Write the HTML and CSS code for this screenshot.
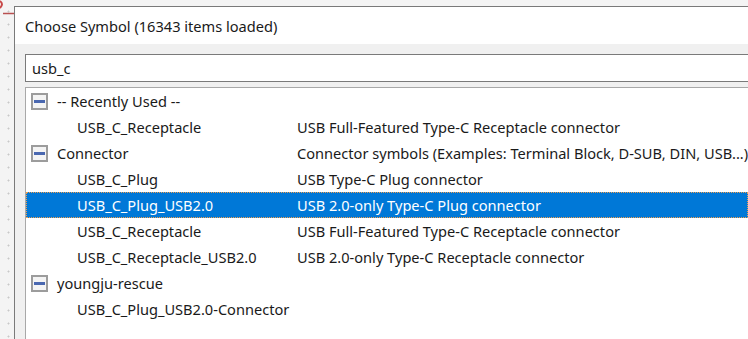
FILE: index.html
```html
<!DOCTYPE html>
<html lang="en">
<head>
  <meta charset="UTF-8">
  <title>Choose Symbol</title>
  <link rel="stylesheet" href="styles.css">
</head>
<body>

<div class="canvas">
  <svg class="wire" width="16" height="16" viewBox="0 0 16 16">
    <path d="M0 1 Q4 4 0 8" fill="none" stroke="#c84848" stroke-width="2"/>
    <path d="M3 13.5 H14" stroke="#b85050" stroke-width="1.5"/>
  </svg>
</div>

<div class="dialog">
  <div class="title">Choose Symbol (16343 items loaded)</div>
  <div class="body">
    <input type="text" class="search" value="usb_c">
    <div class="tree">
      <div class="row group">
        <span class="name"><span class="toggle"></span>-- Recently Used --</span>
        <span class="desc"></span>
      </div>
      <div class="row">
        <span class="name">USB_C_Receptacle</span>
        <span class="desc">USB Full-Featured Type-C Receptacle connector</span>
      </div>
      <div class="row group">
        <span class="name"><span class="toggle"></span>Connector</span>
        <span class="desc">Connector symbols (Examples: Terminal Block, D-SUB, DIN, USB...)</span>
      </div>
      <div class="row">
        <span class="name">USB_C_Plug</span>
        <span class="desc">USB Type-C Plug connector</span>
      </div>
      <div class="row selected">
        <span class="name">USB_C_Plug_USB2.0</span>
        <span class="desc">USB 2.0-only Type-C Plug connector</span>
      </div>
      <div class="row">
        <span class="name">USB_C_Receptacle</span>
        <span class="desc">USB Full-Featured Type-C Receptacle connector</span>
      </div>
      <div class="row">
        <span class="name">USB_C_Receptacle_USB2.0</span>
        <span class="desc">USB 2.0-only Type-C Receptacle connector</span>
      </div>
      <div class="row group">
        <span class="name"><span class="toggle"></span>youngju-rescue</span>
        <span class="desc"></span>
      </div>
      <div class="row">
        <span class="name">USB_C_Plug_USB2.0-Connector</span>
        <span class="desc"></span>
      </div>
    </div>
  </div>
</div>

</body>
</html>
```

FILE: styles.css
```css
body {
  margin: 0;
  width: 748px;
  height: 339px;
  display: flex;
  overflow: hidden;
  background: #f4f4f4;
  font-family: 'Noto Sans', sans-serif;
  font-size: 14.6px;
  color: #1a1a1a;
}

.canvas {
  width: 14px;
  flex: none;
  position: relative;
  background-color: #f4f4f4;
  background-image: radial-gradient(circle, #c8c8c8 0.8px, transparent 1.2px);
  background-size: 13px 13px;
  background-position: 2px 5px;
}

.wire {
  position: absolute;
  top: 0;
  left: 0;
}

.dialog {
  flex: 1;
  margin-top: 6px;
  border-top: 1px solid #7a7a7a;
  border-left: 1px solid #7a7a7a;
  background: #f0f0f0;
  display: flex;
  flex-direction: column;
  min-width: 0;
}

.title {
  height: 37px;
  background: white;
  padding-left: 10px;
  display: flex;
  align-items: center;
  white-space: nowrap;
}

.body {
  flex: 1;
  padding: 10px 0 0 10px;
  display: flex;
  flex-direction: column;
  gap: 5px;
}

.search {
  height: 26px;
  margin: 0;
  padding: 0 0 0 6px;
  border: 1px solid #7a7a7a;
  border-right: none;
  font-family: inherit;
  font-size: 14.6px;
  color: #1a1a1a;
  background: white;
  outline: none;
  box-sizing: content-box;
}

.tree {
  flex: 1;
  background: white;
  border-top: 1px solid #a8a8a8;
  border-left: 1px solid #a8a8a8;
}

.row {
  height: 26px;
  display: grid;
  grid-template-columns: 270px 1fr;
  align-items: center;
  white-space: nowrap;
  box-sizing: border-box;
  border: 1px solid transparent;
}

.name {
  padding-left: 50px;
  display: flex;
  align-items: center;
}

.row.group .name {
  padding-left: 4px;
}

.toggle {
  width: 13px;
  height: 13px;
  border: 2px solid #9c9c9c;
  background: #f4f4f4;
  margin-right: 9px;
  position: relative;
  flex: none;
}

.toggle::after {
  content: "";
  position: absolute;
  left: 1px;
  right: 1px;
  top: 5px;
  height: 3px;
  background: #4a68b0;
}

.row.selected {
  background: #0078d7;
  color: white;
  border: 1px dotted #f0a050;
}
```
